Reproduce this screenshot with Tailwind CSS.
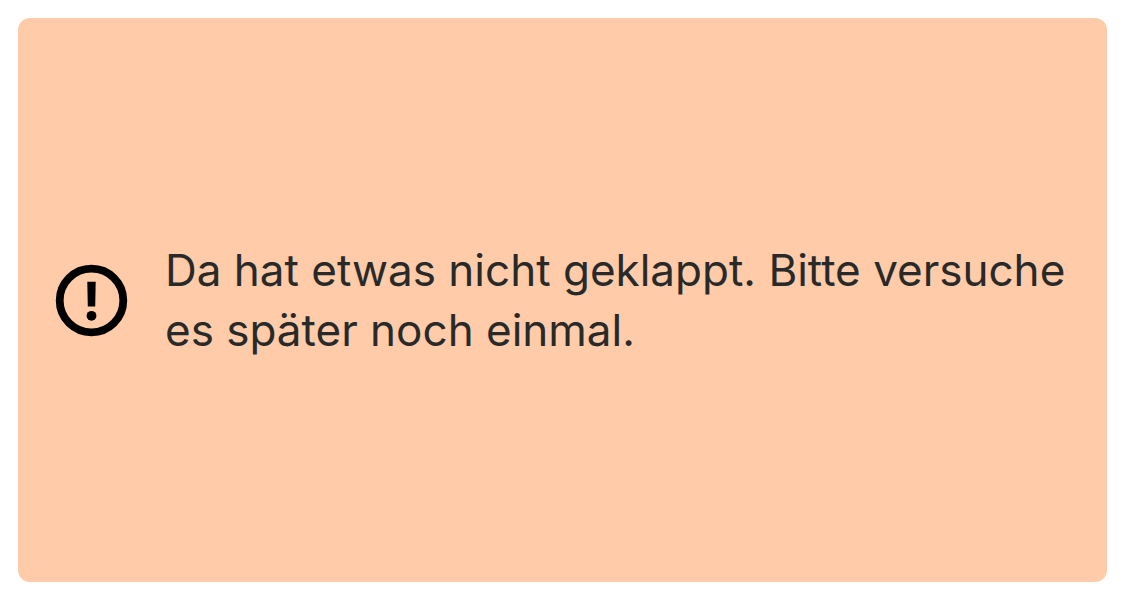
<!DOCTYPE html>
<html lang="de">
<head>
<meta charset="utf-8">
<meta name="viewport" content="width=device-width, initial-scale=1">
<title>Fehler</title>
<script src="https://cdn.jsdelivr.net/npm/@tailwindcss/browser@4"></script>
</head>
<body class="flex min-h-screen bg-white p-[18px] font-['Inter','Liberation_Sans',sans-serif]">
<div role="alert" class="flex grow items-center gap-[37px] rounded-xl bg-[#ffcba9] px-[37px]">
<svg class="size-[73px] shrink-0" viewBox="0 0 73 73" aria-hidden="true">
<circle cx="36.5" cy="36.5" r="31.8" fill="none" stroke="#000" stroke-width="7.8"/>
<path d="M32.3 17.7h8.4l-.5 24.8h-7.4z"/>
<circle cx="36.5" cy="51.8" r="4.9"/>
</svg>
<p class="text-[44px] leading-[60px] text-[#282a2a]">Da hat etwas nicht geklappt. Bitte versuche es später noch einmal.</p>
</div>
</body>
</html>
